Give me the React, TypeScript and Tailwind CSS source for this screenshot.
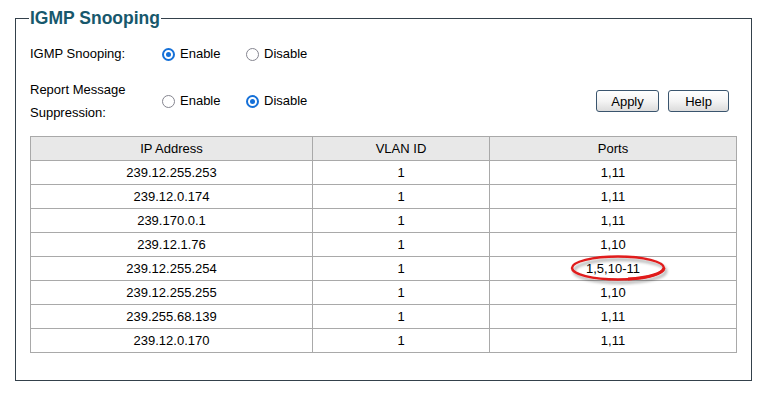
import React from 'react';

interface Row {
  ip: string;
  vlan: string;
  ports: string;
  marked?: boolean;
}

const rows: Row[] = [
  { ip: '239.12.255.253', vlan: '1', ports: '1,11' },
  { ip: '239.12.0.174', vlan: '1', ports: '1,11' },
  { ip: '239.170.0.1', vlan: '1', ports: '1,11' },
  { ip: '239.12.1.76', vlan: '1', ports: '1,10' },
  { ip: '239.12.255.254', vlan: '1', ports: '1,5,10-11', marked: true },
  { ip: '239.12.255.255', vlan: '1', ports: '1,10' },
  { ip: '239.255.68.139', vlan: '1', ports: '1,11' },
  { ip: '239.12.0.170', vlan: '1', ports: '1,11' },
];

function Radio({ checked, label }: { checked: boolean; label: string }) {
  return (
    <label className="flex items-center gap-[5px]">
      {checked ? (
        <span className="flex h-[13px] w-[13px] items-center justify-center rounded-full border-2 border-[#1570d8] bg-white">
          <span className="h-[5px] w-[5px] rounded-full bg-[#1570d8]" />
        </span>
      ) : (
        <span className="h-[13px] w-[13px] rounded-full border-[1.5px] border-[#85858f] bg-white" />
      )}
      <span>{label}</span>
    </label>
  );
}

function Button({ children, width }: { children: React.ReactNode; width: string }) {
  return (
    <button
      className={`${width} h-[22px] rounded-[3px] border border-[#3a556e] bg-gradient-to-b from-white via-[#f4f4f4] to-[#dcdcdc] text-[13px] leading-none text-black`}
    >
      {children}
    </button>
  );
}

// hand-drawn red mark round the changed ports
function Ellipse() {
  return (
    <svg
      className="pointer-events-none absolute left-[80px] top-[-3px]"
      width="100"
      height="32"
      viewBox="0 0 100 32"
    >
      <defs>
        <filter id="sh" x="-20%" y="-40%" width="140%" height="180%">
          <feDropShadow dx="2" dy="3" stdDeviation="1.6" floodColor="#000" floodOpacity="0.35" />
        </filter>
      </defs>
      <ellipse cx="48" cy="14" rx="46" ry="11.5" fill="none" stroke="#e01b1b" strokeWidth="2.5" filter="url(#sh)" />
      <path d="M58 25 C80 24 93 19 94 14" fill="none" stroke="#e01b1b" strokeWidth="3.2" />
    </svg>
  );
}

export default function App() {
  return (
    <div className="h-[399px] w-[771px] bg-white font-['Liberation_Sans',Arial,sans-serif] text-[13px] text-black">
      <fieldset className="ml-[15px] mt-[8px] h-[373px] w-[737px] border border-[#34414b] pl-[14px] pr-[14px]">
        <legend className="ml-[-1px] px-[1px] text-[17.5px] font-bold leading-[21px] text-[#17586c]">
          IGMP Snooping
        </legend>

        <div className="mt-[14px] flex h-[22px] items-center">
          <div className="w-[132px]">IGMP Snooping:</div>
          <div className="w-[84px]">
            <Radio checked label="Enable" />
          </div>
          <Radio checked={false} label="Disable" />
        </div>

        <div className="mt-[13px] flex h-[46px] items-center">
          <div className="w-[132px] leading-[23px]">
            Report Message
            <br />
            Suppression:
          </div>
          <div className="w-[84px]">
            <Radio checked={false} label="Enable" />
          </div>
          <Radio checked label="Disable" />
          <div className="ml-auto mr-[8px] flex gap-[9px]">
            <Button width="w-[63px]">Apply</Button>
            <Button width="w-[61px]">Help</Button>
          </div>
        </div>

        <table className="mt-[12px] w-[707px] border-collapse text-center">
          <thead>
            <tr className="h-[24px] bg-[#e8e8e8]">
              <th className="w-[282px] border border-[#a9a9a9] font-normal">IP Address</th>
              <th className="w-[177px] border border-[#a9a9a9] font-normal">VLAN ID</th>
              <th className="border border-[#a9a9a9] font-normal">Ports</th>
            </tr>
          </thead>
          <tbody>
            {rows.map((r) => (
              <tr key={r.ip} className="h-[24px]">
                <td className="border border-[#a9a9a9]">{r.ip}</td>
                <td className="border border-[#a9a9a9]">{r.vlan}</td>
                <td className="relative border border-[#a9a9a9]">
                  {r.ports}
                  {r.marked && <Ellipse />}
                </td>
              </tr>
            ))}
          </tbody>
        </table>
      </fieldset>
    </div>
  );
}
